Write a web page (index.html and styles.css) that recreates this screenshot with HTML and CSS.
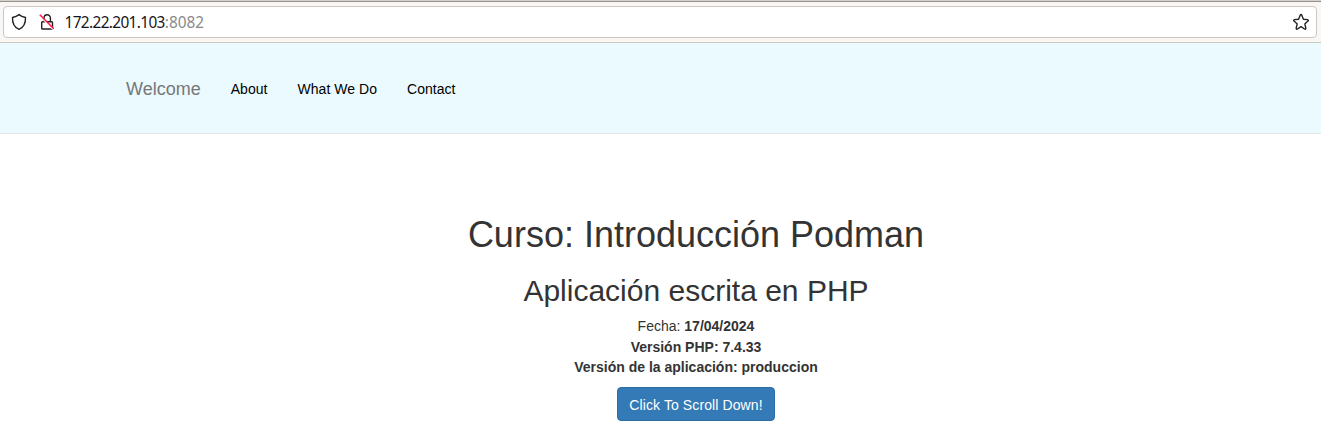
FILE: index.html
```html
<!DOCTYPE html>
<html lang="es">
<head>
<meta charset="utf-8">
<title>Curso: Introducción Podman</title>
<link rel="stylesheet" href="styles.css">
</head>
<body>
<div class="window-edge"></div>
<div class="toolbar">
  <div class="urlbar">
    <svg class="icon shield" viewBox="0 0 16 18"><path d="M8 1.600 Q10.500 3.700 14.500 4.500C14.700 10 13 14.300 8 16.300 3 14.300 1.300 10 1.500 4.500 5.500 3.700 8 1.600 8 1.600Z"/></svg>
    <svg class="icon lock" viewBox="0 0 16 18"><path d="M5 9V5a3.200 3.200 0 0 1 6.400 0V8.700M3.500 8.700h9.200q.8 0 .8.800v5.700q0 .8-.8.800H3.500q-.8 0-.8-.8V9.500q0-.8.800-.8Z"/><path class="gap" d="M1 3.200 14 16.200"/><path class="slash" d="M.8 1.800 14.800 15.800"/></svg>
    <span class="url">172.22.201.103<span class="port">:8082</span></span>
    <svg class="icon star" viewBox="0 0 16 18"><path d="M7.200 2.200Q8 .8 8.800 2.200L10.400 6.200 14.500 6.600Q16 7 14.900 8.100L11.800 10.900 12.800 15.200Q12.800 16.700 11.500 16L8 13.700 4.500 16Q3.200 16.700 3.200 15.200L4.200 10.900 1.100 8.100Q0 7 1.500 6.600L5.600 6.200Z"/></svg>
  </div>
</div>
<nav class="nav">
  <a class="brand">Welcome</a>
  <a class="link">About</a>
  <a class="link">What We Do</a>
  <a class="link">Contact</a>
</nav>
<main class="intro">
  <h1>Curso: Introducción Podman</h1>
  <h2>Aplicación escrita en PHP</h2>
  <div class="line">Fecha: <b>17/04/2024</b></div>
  <div class="line"><b>Versión PHP: 7.4.33</b></div>
  <div class="line"><b>Versión de la aplicación: produccion</b></div>
  <a class="button">Click To Scroll Down!</a>
</main>
</body>
</html>
```
FILE: styles.css
```css
* { box-sizing: border-box; }
body { margin: 0; overflow: hidden; background: #fff; color: #333; font: 14px/20px "Liberation Sans", Arial, sans-serif; }
.window-edge { height: 1px; background: #d6d1cd; }
.toolbar { height: 42px; padding: 4px 4px 4px 3px; background: #f8f7f6; border-top: 1px solid #96908b; border-bottom: 1px solid #cdc7c2; }
.urlbar { display: flex; align-items: center; height: 32px; padding: 0 7px; background: #fff; border: 1px solid #cdc7c2; border-radius: 4px; }
.icon { width: 16px; height: 18px; fill: none; stroke: #222; stroke-width: 1.4; stroke-linejoin: round; }
.lock { margin-left: 12px; }
.gap { stroke: #fff; stroke-width: 1.6; }
.slash { stroke: #ff1745; stroke-width: 1.5; }
.url { margin: 1px 0 0 9.5px; font: 15.4px/20px "Noto Sans", sans-serif; letter-spacing: -.64px; color: #15141a; }
.port { color: #8a8a8a; letter-spacing: 0; }
.star { margin-left: auto; }
.nav { display: flex; align-items: center; height: 91px; padding: 2px 0 0 126px; background: #eafaff; border-bottom: 1px solid #e1e7e9; }
.brand { margin-right: 30px; font-size: 18px; color: #777; }
.link { margin-right: 30px; color: #000; letter-spacing: .04px; }
.intro { width: 1321px; padding: 81px 0 0 71px; text-align: center; }
h1, h2 { margin: 0; font-weight: 400; line-height: 1.1; }
h1 { font-size: 36px; line-height: 40px; }
h2 { margin: 19px 0 9px; font-size: 30px; line-height: 33px; }
.line { line-height: 20.5px; }
.button { display: inline-block; margin-top: 9px; padding: 7px 11.5px 5px; color: #fff; background: #337ab7; border: 1px solid #2e6da4; border-radius: 4px; letter-spacing: .1px; }
```
